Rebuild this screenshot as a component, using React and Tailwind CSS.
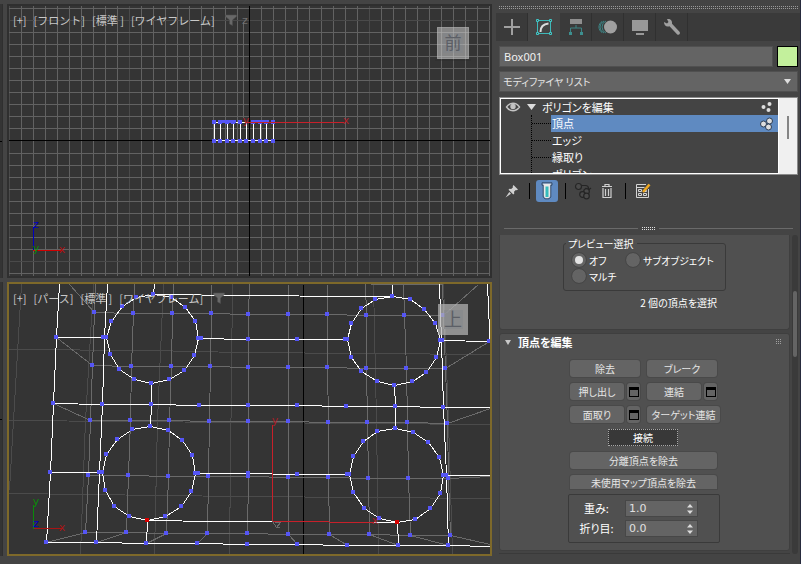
import React, { useState } from 'react';

const FRONT_COLUMNS = Array.from({ length: 41 }, (_, i) => 9 + i * 12);
const FRONT_ROWS = [
  ...Array.from({ length: 11 }, (_, i) => 8 + i * 12),
  ...Array.from({ length: 11 }, (_, i) => 153 + i * 12),
];
const BOX_COLUMNS = [214, 220, 227, 233, 240, 246, 253, 260, 266, 273];

// Rings of vertices round the four holes in the top face
const RINGS = [
  [[153, 294], [136, 297], [122, 306], [111, 321], [106, 337], [110, 354], [119, 369], [134, 379], [151, 383], [169, 379], [184, 370], [194, 355], [198, 338], [195, 321], [185, 307], [171, 297]],
  [[392, 296], [375, 299], [361, 308], [351, 323], [347, 339], [351, 357], [361, 371], [377, 381], [394, 385], [412, 381], [426, 372], [436, 357], [440, 340], [435, 323], [424, 309], [410, 299]],
  [[150, 426], [132, 429], [117, 439], [106, 454], [102, 472], [105, 490], [114, 506], [129, 516], [147, 520], [165, 516], [181, 506], [191, 491], [195, 473], [192, 455], [182, 440], [168, 430]],
  [[395, 428], [377, 431], [363, 441], [353, 456], [349, 474], [353, 492], [364, 508], [379, 518], [397, 522], [415, 519], [430, 508], [440, 493], [443, 475], [439, 457], [428, 442], [413, 432]],
];

const TOP_VERTICES = [
  [56, 337], [103, 337], [201, 338], [248, 339], [297, 339], [345, 339], [442, 340], [489, 341],
  [53, 403], [102, 404], [151, 404], [199, 405], [248, 405], [297, 405], [346, 406], [395, 406], [443, 407],
  [50, 472], [99, 472], [198, 473], [248, 473], [297, 474], [347, 474], [446, 475],
  [46, 542], [96, 542], [146, 543], [197, 543], [247, 544], [297, 544], [347, 545], [398, 545], [448, 545],
];

const BACK_ROWS = [
  [[94, 312], [133, 313], [172, 313], [211, 313], [248, 314], [288, 314], [327, 314], [366, 315], [404, 315], [443, 315]],
  [[92, 365], [131, 366], [171, 366], [210, 366], [248, 367], [288, 367], [327, 367], [366, 368], [406, 368], [445, 368]],
  [[90, 420], [130, 420], [169, 420], [209, 421], [248, 421], [288, 421], [328, 422], [367, 422], [407, 422], [447, 423]],
  [[88, 475], [128, 475], [168, 476], [208, 476], [248, 476], [288, 477], [328, 477], [368, 478], [408, 478], [448, 478]],
  [[85, 532], [126, 532], [166, 533], [207, 533], [247, 533], [288, 534], [329, 534], [369, 534], [410, 535], [450, 535]],
];
const BACK_TOPS = [[95, 284], [134, 284], [173, 284], [211, 284], [249, 284], [288, 284], [327, 284], [365, 284], [403, 284], [442, 284]];

const toPoints = (list) => list.map((p) => p.join(',')).join(' ');

function Vertex({ x, y, color = '#5555f5' }) {
  return <rect x={x - 2} y={y - 2} width="4" height="4" fill={color} />;
}

function AxisLabel({ x, y, color, children }) {
  return (
    <text x={x} y={y} fill={color} fontSize="11" textAnchor="middle" fontFamily="'DejaVu Sans', sans-serif">
      {children}
    </text>
  );
}

function ViewportMenu({ items }) {
  return (
    <div className="absolute left-1 top-[7px] flex items-center gap-[7px] whitespace-nowrap text-[11px] leading-[14px] text-[#c8c8c8]">
      {items.map((item) => (
        <button key={item} type="button">{item}</button>
      ))}
      <button type="button" aria-label="フィルタ" className="ml-[3px]">
        <svg className="h-3 w-3" viewBox="0 0 12 12">
          <path d="M0.5 1h11v1.5L7.5 6v5.5l-3-1.5V6L0.5 2.5z" fill="#686868" stroke="#4d4d4d" strokeWidth="0.6" />
        </svg>
      </button>
    </div>
  );
}

function FrontView() {
  return (
    <div className="relative min-w-0 overflow-hidden border-2 border-[#2f2f2f] bg-[#343434]">
      <svg className="absolute inset-0 h-full w-full" viewBox="9 6 481 270" preserveAspectRatio="xMidYMid slice">
        <g shapeRendering="crispEdges">
          {FRONT_COLUMNS.map((x) => (
            <rect key={x} x={x} y="6" width="1" height="270" fill={x === 129 || x === 369 || x === 9 ? '#4a4a4a' : '#626262'} />
          ))}
          {FRONT_ROWS.map((y) => (
            <rect key={y} x="9" y={y} width="481" height="1" fill={y === 20 || y === 261 ? '#4a4a4a' : '#626262'} />
          ))}
          <rect x="243" y="22" width="1" height="96" fill="#646464" />
          <rect x="9" y="140" width="481" height="1" fill="#000" />
          <rect x="249" y="6" width="1" height="270" fill="#000" />
          <rect x="214" y="122" width="60" height="1" fill="#fff" />
          <rect x="214" y="140" width="60" height="1" fill="#fff" />
          {BOX_COLUMNS.map((x) => (
            <rect key={x} x={x} y="122" width="1" height="18" fill="#fff" />
          ))}
          {BOX_COLUMNS.map((x) => (
            <g key={x}>
              {x !== 246 && <Vertex x={x} y={122} />}
              <Vertex x={x} y={141} />
            </g>
          ))}
          <rect x="219" y="120" width="17" height="3" fill="#5555f5" />
          <rect x="252" y="120" width="17" height="3" fill="#5555f5" />
          <rect x="246" y="122" width="98" height="1" fill="#c8202a" />
          <rect x="33" y="227" width="1" height="24" fill="#0000c0" />
          <rect x="33" y="250" width="28" height="1" fill="#d00000" />
        </g>
        <AxisLabel x={245} y={24} color="#707070">z</AxisLabel>
        <AxisLabel x={246} y={124} color="#b02028">y</AxisLabel>
        <AxisLabel x={346} y={124} color="#b02028">x</AxisLabel>
        <AxisLabel x={36} y={228} color="#0000c0">z</AxisLabel>
        <AxisLabel x={36} y={252} color="#0a8a0a">y</AxisLabel>
        <AxisLabel x={62} y={253} color="#b01010">x</AxisLabel>
        <rect x="437" y="27" width="32" height="32" fill="#a2a2a2" fillOpacity="0.75" />
        <rect x="443" y="33" width="20" height="20" fill="#82858a" fillOpacity="0.6" />
        <path d="M437.5 27.500h31v31h-31zM441.500 27v32M453.500 27v32M465.500 27v32M437 32.500h32M437 44.500h32M437 56.500h32" fill="none" stroke="#b4b4b4" strokeOpacity="0.35" />
        <path d="M435 60h36" stroke="#2a2a2a" strokeOpacity="0.6" />
        <text x="453" y="49" fill="#5c5f66" fontSize="17" textAnchor="middle">前</text>
      </svg>
      <ViewportMenu items={['[+]', '[フロント]', '[標準 ]', '[ワイヤフレーム]']} />
    </div>
  );
}

function PerspectiveView() {
  return (
    <div className="relative min-w-0 overflow-hidden border-2 border-[#7e692a] bg-[#343434]">
      <svg className="absolute inset-0 h-full w-full" viewBox="9 284 481 270" preserveAspectRatio="xMidYMid slice">
        {/* half a pixel over, so that the level lines fall on whole pixels */}
        <g shapeRendering="crispEdges" fill="none" strokeWidth="1" transform="translate(0.5 0.5)">
          {/* home grid */}
          <g stroke="#4b4b4b">
            <path d="M9 349L150 350L240 352L490 354M9 420L240 422L490 424M9 493L240 496L490 498" />
            <path d="M21 284L13 420L9 490M93 284L85 420L80 554M163 284L157 420L154 554M232 284L229 554M373 284L376 420L378 554M443 284L448 420L452 554" />
          </g>
          <path d="M303 284V554" stroke="#000" />

          {/* hidden side of the box */}
          <g stroke="#6a6a6a">
            {BACK_ROWS.map((row) => <polyline key={row[0][1]} points={toPoints(row)} />)}
            {BACK_TOPS.map((top, i) => (
              <polyline key={top[0]} points={toPoints([top, ...BACK_ROWS.map((row) => row[i])])} />
            ))}
            <path d="M69 284L94 312M56 337L92 365M53 403L90 420M46 542L85 532M96 542L126 532M146 543L166 533M197 543L207 533M297 544L288 534M347 545L329 534M398 545L369 534M448 545L410 535M490 544L450 535M478 284L443 315M489 341L445 368M490 408L447 423M448 478L490 476M370 284H442" />
          </g>

          <g stroke="#fff">
            <path d="M59 284L56 337L53 403L50 472L46 542M107 284L104 337L102 404L99 472L96 542M439 284L441 340L443 407L446 475L448 545M487 284L490 352" />
            <path d="M153 294L248 295L349 296H392M56 337H105M198 338L248 339H347M440 340L489 341" />
            <path d="M53 403L102 404H151L199 405H297L346 406H395L443 407H490" />
            <path d="M50 472H102M195 473H248L297 474H349M443 475H490" />
            <path d="M46 542H96L146 543H197L247 544H297L347 545H448L490 546M147 520L215 521H272M373 522H397" />
            <path d="M154 284L153 294M151 383V404L150 426M147 520L146 543M392 284V296M394 385L395 406V428M397 522L398 545" />
            {RINGS.map((ring) => <polygon key={ring[0].join()} points={toPoints(ring)} />)}
          </g>
        </g>

        <g shapeRendering="crispEdges">
          {[...TOP_VERTICES, ...RINGS.flat(), ...BACK_ROWS.flat()].map(([x, y]) => (
            <Vertex key={`${x}-${y}`} x={x} y={y} />
          ))}
          <Vertex x={147} y={520} color="#d80000" />
          <Vertex x={397} y={522} color="#d80000" />
        </g>

        <g shapeRendering="crispEdges" fill="none" transform="translate(0.5 0.5)">
          <path d="M272 424V521H328L329 522H373" stroke="#c8202a" />
          <path d="M272 521l4 6M274 522h6l-4 5h3" stroke="#6a6a6a" />
          <path d="M33 504V528" stroke="#0a8a0a" />
          <path d="M33 528H61" stroke="#a81414" />
        </g>
        <AxisLabel x={275} y={424} color="#a82028">y</AxisLabel>
        <AxisLabel x={375} y={524} color="#a82028">x</AxisLabel>
        <AxisLabel x={36} y={505} color="#0a8a0a">y</AxisLabel>
        <AxisLabel x={36} y={527} color="#0000c0">z</AxisLabel>
        <AxisLabel x={62} y={531} color="#a81414">x</AxisLabel>
        <rect x="438" y="304" width="30" height="31" fill="#b4b4b4" fillOpacity="0.72" />
        <rect x="444" y="310" width="19" height="19" fill="#85888c" fillOpacity="0.6" />
        <text x="453" y="326" fill="#5c5f66" fontSize="18" textAnchor="middle">上</text>
      </svg>
      <ViewportMenu items={['[+]', '[パース]', '[標準 ]', '[ワイヤフレーム]']} />
    </div>
  );
}

const TABS = [
  {
    id: 'create',
    label: '作成',
    icon: <path d="M12 4v16M4 12h16" stroke="#a0a0a0" strokeWidth="2" />,
  },
  {
    id: 'modify',
    label: '修正',
    icon: (
      <>
        <path d="M5.500 7v10M18.500 7v10M7 5.500h10M7 18.500h10" stroke="#3fb8b8" />
        <path d="M4.500 4.500h2v2h-2zM17.500 4.500h2v2h-2zM4.500 17.500h2v2h-2zM17.500 17.500h2v2h-2z" stroke="#3fc8c8" />
        <path d="M8.500 17c0-4.500 2.500-8 8-8.500" stroke="#dcdcdc" strokeWidth="2" />
      </>
    ),
  },
  {
    id: 'hierarchy',
    label: '階層',
    icon: (
      <>
        <path d="M6 4h12v5H6z" fill="#8f8f8f" />
        <path d="M12 10v3M6.500 17v-4h11v4" stroke="#3d8585" />
        <path d="M5 17h3v3H5zM16 17h3v3h-3z" fill="#3d8f8f" />
      </>
    ),
  },
  {
    id: 'motion',
    label: 'モーション',
    icon: (
      <>
        <path d="M8 6a6.500 6.500 0 000 12M6 6.500a6.500 6.500 0 000 11M10 6a6.500 6.500 0 000 12" stroke="#3d8585" />
        <circle cx="14.500" cy="12" r="6.500" fill="#a0a0a0" />
      </>
    ),
  },
  {
    id: 'display',
    label: '表示',
    icon: <path d="M4 5h16v11H4zM8 18h8v2H8z" fill="#999" />,
  },
  {
    id: 'utilities',
    label: 'ユーティリティ',
    icon: <path d="M4 7l3 1.500 1.500-1.500L7 4.200c3-.8 5.500 1.300 5 4.500l7.500 8c1.500 2-.8 4-2.500 2.500l-7.500-8C6.500 12.500 3.800 10 4 7z" fill="#a0a0a0" />,
  },
];

function CommandTabs({ active, onChange }) {
  return (
    <div role="tablist" className="-ml-[3px] -mr-[2px] flex h-7 bg-[#3a3a3a]">
      {TABS.map((tab) => (
        <button
          key={tab.id}
          type="button"
          role="tab"
          aria-selected={tab.id === active}
          aria-label={tab.label}
          onClick={() => onChange(tab.id)}
          className={`flex w-8 items-center justify-center border-r ${
            tab.id === active ? 'border-[#444] bg-[#444]' : 'border-[#303030]'
          }`}
        >
          <svg className="h-6 w-6" viewBox="0 0 24 24" fill="none">{tab.icon}</svg>
        </button>
      ))}
    </div>
  );
}

function DotsIcon({ outlined }) {
  return (
    <svg className="h-4 w-4" viewBox="0 0 16 16" fill="#dedede" stroke={outlined ? '#2c3d54' : 'none'}>
      <circle cx="4.500" cy="8" r={outlined ? 3 : 2} />
      <circle cx="10.500" cy="5" r={outlined ? 3 : 2} />
      <circle cx="9.500" cy="11" r={outlined ? 3 : 2} />
    </svg>
  );
}

const SUB_LEVELS = ['頂点', 'エッジ', '縁取り', 'ポリゴン'];

function ModifierStack() {
  const [level, setLevel] = useState('頂点');

  return (
    <div className="mt-[5px] flex h-[78px] overflow-hidden border border-[#8a8a8a]">
      <div className="flex-1 overflow-hidden border border-white">
        <div className="flex h-4 items-center pl-1">
          <button type="button" aria-label="表示を切り替え" className="w-5">
            <svg className="h-4 w-4" viewBox="0 0 16 16" fill="none" stroke="#c4c4c4" strokeWidth="1.400">
              <path d="M1.500 8c3.500-5 9.500-5 13 0-3.500 5-9.500 5-13 0z" />
              <circle cx="8" cy="7.500" r="2" fill="#c4c4c4" />
            </svg>
          </button>
          <svg className="h-2 w-4" viewBox="0 0 16 8"><path d="M2 1h9L6.500 7z" fill="#dcdcdc" /></svg>
          <span className="flex-1 pl-[1px] text-white">ポリゴンを編集</span>
          <span className="mr-[3px]"><DotsIcon /></span>
        </div>
        <ul className="ml-[30px] border-l border-dotted border-black">
          {SUB_LEVELS.map((name) => (
            <li key={name} className="flex h-[17px] items-center">
              <span className="w-[19px] border-t border-dotted border-black pr-[2px]" />
              <button
                type="button"
                onClick={() => setLevel(name)}
                className={`flex h-[17px] flex-1 items-center justify-between pl-[1px] pr-[3px] text-left text-white ${
                  name === level ? 'bg-[#5f8ac1]' : ''
                }`}
              >
                {name}
                {name === level && <DotsIcon outlined />}
              </button>
            </li>
          ))}
        </ul>
      </div>
      <div className="w-[18px] bg-[#f0f0f0] pl-2 pt-[18px]">
        <div className="h-[23px] w-[2px] bg-[#858585]" />
      </div>
    </div>
  );
}

function StackToolbar() {
  return (
    <div className="mt-1 flex h-[24px] items-center pl-[5px]">
      <button type="button" aria-label="スタックを固定">
        <svg className="h-4 w-4" viewBox="0 0 16 16">
          <path d="M9.500 2L14 6.500l-1.200.8-1-.3-1.800 1.800.3 1.700-1 1L4.500 6.700l1-1 1.700.3L9 4.200l-.3-1zM5.300 9l1.700 1.700L1.500 14.500z" fill="#d0d0d0" />
        </svg>
      </button>
      <span className="ml-[9px] h-4 w-[1px] bg-black" />
      <button type="button" aria-label="最終結果を表示" className="ml-[6px] flex h-[22px] w-[22px] items-center justify-center rounded-[3px] bg-[#5f8ac1]">
        <svg className="h-[18px] w-3" viewBox="0 0 12 18">
          <path d="M1.500 2h9M3 2v11.500a2.500 2.500 0 003 2.500 2.500 2.500 0 003-2.500V2" fill="#e8e8e8" stroke="#e8e8e8" />
          <path d="M1 .8h10v2.400H9.800V15L8 16.800H4L2.200 15V3.200H1z" fill="none" stroke="#2c3d54" strokeWidth="0.800" />
          <path d="M4.500 4.500h3V15h-3z" fill="#35bcbc" />
        </svg>
      </button>
      <span className="ml-[7px] h-4 w-[1px] bg-black" />
      <button type="button" aria-label="固有にする" className="ml-2">
        <svg className="h-[18px] w-[18px]" viewBox="0 0 18 18" fill="#4a4a4a" stroke="#252525" strokeWidth="1.200">
          <path d="M8 3.500h3.500a3 3 0 013 3V8M11.500 6l2.500 2.500L17 6" fill="none" />
          <circle cx="4.500" cy="4.500" r="3" />
          <circle cx="12.500" cy="9.500" r="2.800" />
          <circle cx="8.500" cy="12.500" r="2.800" />
          <circle cx="12.500" cy="14" r="2.800" />
        </svg>
      </button>
      <button type="button" aria-label="モディファイヤを除去" className="ml-[7px]">
        <svg className="h-4 w-4" viewBox="0 0 16 16" fill="none" stroke="#cfcfcf" strokeWidth="1.200">
          <path d="M3 3.500h10M6 3.500v-2h4v2M4 5v9.500h8V5M6.500 6v7M9.500 6v7" />
        </svg>
      </button>
      <span className="ml-[10px] h-4 w-[1px] bg-black" />
      <button type="button" aria-label="モディファイヤ セットを設定" className="ml-[9px]">
        <svg className="h-4 w-4" viewBox="0 0 16 16" fill="none" stroke="#d4d4d4">
          <path d="M11 1.500H1.500v13h12V6M1.500 4.500h8M3.500 6.500h3v2h-3zM8.500 7.500h3v1h-3zM3.500 10.500h3v2h-3zM8.500 10.500h3v2h-3z" />
          <path d="M8 9l6.500-7.500" stroke="#f0a820" strokeWidth="2.600" />
        </svg>
      </button>
    </div>
  );
}

function PushButton({ className = 'h-[17px] rounded-[3px]', children }) {
  return (
    <button
      type="button"
      className={`whitespace-nowrap bg-[#646464] text-[10px] leading-4 text-[#e6e6e6] shadow-[0_0_0_1px_#494949] ${className}`}
    >
      {children}
    </button>
  );
}

function SettingsButton({ label }) {
  return (
    <button type="button" aria-label={label} className="flex h-[17px] w-[13px] items-center justify-center rounded-[3px] bg-[#646464] shadow-[0_0_0_1px_#494949]">
      <span className="h-[10px] w-[10px] border border-t-[3px] border-black" />
    </button>
  );
}

function Radio({ label, value, checked, onChange }) {
  return (
    <label className="flex h-4 items-center gap-[3px] text-white">
      <input
        type="radio"
        name="preview"
        value={value}
        checked={checked}
        onChange={() => onChange(value)}
        className="h-[14px] w-[14px] appearance-none rounded-full border-[3px] border-[#646464] bg-[#646464] outline outline-[#474747] checked:bg-[#e4e4e4]"
      />
      {label}
    </label>
  );
}

function Spinner({ id, label, value, onChange }) {
  return (
    <div className="flex h-5 items-center">
      <label htmlFor={id} className="w-[53px] pr-[6px] text-center text-white">{label}</label>
      <div className="flex h-[15px] w-[71px] items-center bg-[#646464] pr-1 outline outline-[#474747]">
        <input
          id={id}
          value={value}
          onChange={(e) => onChange(e.target.value)}
          className="w-0 flex-1 bg-transparent pl-[3px] font-['DejaVu_Sans',sans-serif] text-[11px] leading-[15px] text-[#e0e0e0] outline-none"
        />
        <svg className="h-[10px] w-[6px]" viewBox="0 0 6 10" fill="#dcdcdc">
          <path d="M3 0l3 3.500H0zM3 10l3-3.500H0z" />
        </svg>
      </div>
    </div>
  );
}

function PreviewSelection() {
  const [preview, setPreview] = useState('off');

  return (
    <section className="h-[95px] rounded-b-[3px] border border-t-0 border-[#3f3f3f] bg-[#505050] px-[63px] pt-[2px]">
      <fieldset className="h-[54px] rounded-[3px] border border-[#3a3a3a] pl-2">
        <legend className="-ml-[6px] pl-[2px] pr-1 text-[10px] leading-[13px] text-white">プレビュー選択</legend>
        <div className="grid grid-cols-[54px_auto] pt-[2px] text-[10px]">
          <Radio label="オフ" value="off" checked={preview === 'off'} onChange={setPreview} />
          <Radio label="サブオブジェクト" value="sub" checked={preview === 'sub'} onChange={setPreview} />
          <Radio label="マルチ" value="multi" checked={preview === 'multi'} onChange={setPreview} />
        </div>
      </fieldset>
      <p className="mt-1 pr-[9px] text-right text-[10px] leading-4 text-white">2 個の頂点を選択</p>
    </section>
  );
}

function EditVertices() {
  const [weight, setWeight] = useState('1.0');
  const [crease, setCrease] = useState('0.0');

  return (
    <section className="mt-[3px] h-[218px] rounded-[3px] border border-[#3f3f3f] bg-[#505050]">
      <h2 className="flex h-4 items-center pl-[5px] pr-[6px] text-[11px] font-bold text-white">
        <svg className="mr-[7px] h-[5px] w-[6px]" viewBox="0 0 6 5"><path d="M0 0h6L3 5z" fill="#c8c8c8" /></svg>
        <span className="flex-1">頂点を編集</span>
        <svg className="h-[7px] w-[7px]" viewBox="0 0 7 7" fill="#a0a0a0">
          <path d="M0 0h1v1H0zM2 0h1v1H2zM4 0h1v1H4zM0 2h1v1H0zM2 2h1v1H2zM4 2h1v1H4zM0 4h1v1H0zM2 4h1v1H2zM4 4h1v1H4z" />
        </svg>
      </h2>

      <div className="ml-[70px] mt-[10px] flex w-[152px] flex-col gap-[6px]">
        <div className="flex gap-[7px]">
          <PushButton className="h-[17px] w-[70px] rounded-[3px]">除去</PushButton>
          <PushButton className="h-[17px] w-[70px] rounded-[3px]">ブレーク</PushButton>
        </div>
        <div className="flex gap-[7px]">
          <div className="flex w-[70px] gap-[3px]">
            <PushButton className="h-[17px] flex-1 rounded-[3px]">押し出し</PushButton>
            <SettingsButton label="押し出しの設定" />
          </div>
          <div className="flex w-[70px] gap-[3px]">
            <PushButton className="h-[17px] flex-1 rounded-[3px]">連結</PushButton>
            <SettingsButton label="連結の設定" />
          </div>
        </div>
        <div className="flex gap-[7px]">
          <div className="flex w-[70px] gap-[3px]">
            <PushButton className="h-[17px] flex-1 rounded-[3px]">面取り</PushButton>
            <SettingsButton label="面取りの設定" />
          </div>
          <PushButton className="h-[17px] w-[73px] rounded-[3px]">ターゲット連結</PushButton>
        </div>
        <button
          type="button"
          className="ml-[38px] h-[17px] w-[70px] border border-dotted border-[#a8a8a8] bg-[#383838] text-[10px] leading-[14px] text-white"
        >
          接続
        </button>
        <PushButton className="h-[17px] w-[147px] rounded-[3px]">分離頂点を除去</PushButton>
        <PushButton className="h-[14px] w-[147px] rounded-t-[3px]">未使用マップ頂点を除去</PushButton>
      </div>

      <div className="ml-[68px] mt-[5px] flex h-[49px] w-[152px] flex-col justify-center rounded-[2px] border border-[#3a3a3a] pl-1 text-[11px]">
        <Spinner id="weight" label="重み:" value={weight} onChange={setWeight} />
        <Spinner id="crease" label="折り目:" value={crease} onChange={setCrease} />
      </div>
    </section>
  );
}

function CommandPanel() {
  const [tab, setTab] = useState('modify');
  const [objectName, setObjectName] = useState('Box001');

  return (
    <aside className="flex w-[309px] shrink-0 flex-col border-r border-[#262a3c] pl-[7px] pr-[2px] pt-[6px] text-[11px] leading-[15px] [font-feature-settings:'palt']">
      <div className="mb-1 h-[3px] border-y border-dotted border-[#9a9a9a]" />
      <CommandTabs active={tab} onChange={setTab} />

      <div className="mt-[5px] flex gap-1">
        <input
          aria-label="オブジェクト名"
          value={objectName}
          onChange={(e) => setObjectName(e.target.value)}
          className="h-[21px] w-0 flex-1 border border-[#505050] bg-[#646464] px-1 font-['Noto_Sans',sans-serif] text-[11px] text-[#f0f0f0]"
        />
        <button type="button" aria-label="オブジェクト カラー" className="h-[21px] w-[21px] border border-black bg-[#c3f09c]" />
      </div>

      <div className="relative mt-1">
        <select aria-label="モディファイヤ リスト" className="block h-[21px] w-full appearance-none border border-[#505050] bg-[#646464] pl-[3px] text-[10px] text-[#e6e6e6]">
          <option>モディファイヤ リスト</option>
        </select>
        <svg className="pointer-events-none absolute right-[7px] top-2 h-[5px] w-[7px]" viewBox="0 0 7 5"><path d="M0 0h7L3.500 5z" fill="#dedede" /></svg>
      </div>

      <ModifierStack />
      <StackToolbar />

      <div className="mt-[22px] flex h-[7px] items-center gap-1 px-[5px]">
        <span className="h-px flex-1 bg-[#6a6a6a]" />
        <span className="h-[3px] w-[13px] border-y border-dotted border-[#e0e0e0]" />
        <span className="h-px flex-1 bg-[#6a6a6a]" />
      </div>

      <div className="mt-[3px] flex gap-[2px]">
        <div className="flex-1">
          <PreviewSelection />
          <EditVertices />
          <div className="mt-[2px] h-px bg-[#3a3a3a]" />
        </div>
        <div className="w-[6px] rounded-[3px] bg-[#3a3a3a] px-px pt-14">
          <div className="h-[66px] rounded-[2px] bg-[#646464]" />
        </div>
      </div>
    </aside>
  );
}

export default function App() {
  return (
    <div className="flex min-h-screen bg-[#444] font-['Noto_Sans_CJK_JP',sans-serif]">
      {/* edge of the neighbouring viewports */}
      <div className="mr-1 grid w-[3px] grid-rows-2 gap-1 pb-2 pt-1">
        <div className="flex flex-col justify-center border-r border-[#2f2f2f] bg-[#343434]">
          <div className="h-px bg-black" />
        </div>
        <div className="flex flex-col justify-center border-r border-[#2f2f2f] bg-[#343434]">
          <div className="h-px bg-black" />
        </div>
      </div>
      <main className="grid min-w-0 flex-1 grid-rows-2 gap-1 pb-2 pt-1">
        <FrontView />
        <PerspectiveView />
      </main>
      <CommandPanel />
    </div>
  );
}
